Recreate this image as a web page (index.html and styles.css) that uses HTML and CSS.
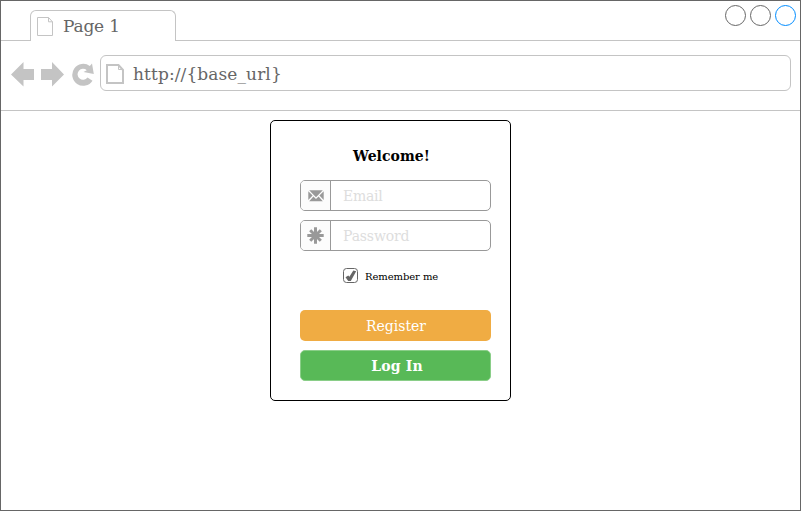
FILE: index.html
```html
<!DOCTYPE html>
<html lang="en">
<head>
<meta charset="utf-8">
<title>Page 1</title>
<link rel="stylesheet" href="styles.css">
</head>
<body>
<div class="window">
  <header class="tabstrip">
    <div class="tab">
      <svg class="tab-icon" width="17" height="20" viewBox="0 0 17 20"><path d="M.5.5H11.500L15.500 4.800V18.500H.5ZM11.500.5V4.800H15.500"/></svg>
      <span>Page 1</span>
    </div>
    <div class="controls">
      <svg width="71" height="22" viewBox="0 0 71 22"><circle cx="10.500" cy="10.500" r="10"/><circle cx="35.500" cy="10.500" r="10"/><circle class="active" cx="60.500" cy="10.500" r="10"/></svg>
    </div>
  </header>
  <nav class="toolbar">
    <svg class="nav-icons" width="84" height="26" viewBox="0 0 84 26">
      <path d="M0 13.500 12.500 1V8H23V19H12.500V25.500Z"/>
      <path d="M53 13.500 41 1V8H30V19H41V25.500Z"/>
      <path d="M81 2.500 82.800 13 72.500 11 75.800 9.200A5.500 5.500 0 1 0 76.500 16.500L81.500 19.800A11 11 0 1 1 78.800 5Z"/>
    </svg>
    <div class="address">
      <svg class="page-icon" width="18" height="20" viewBox="0 0 18 20"><path d="M1 1H12.500L17 6V19H1Z"/><path class="fold" d="M12.500 1V5.500H17"/></svg>
      <span>http://{base_url}</span>
    </div>
  </nav>
  <main class="content">
    <form class="card">
      <h1>Welcome!</h1>
      <div class="field">
        <div class="addon"><svg width="16" height="12" viewBox="0 0 16 12"><path d="M1.200.3H14.800L8 7.300ZM.3 1.200 4.600 5.600.3 10ZM15.700 1.200V10L11.400 5.600ZM5.400 6.500 8 9.100 10.600 6.500 14.800 11.300H1.200Z"/></svg></div>
        <span class="placeholder email">Email</span>
      </div>
      <div class="field">
        <div class="addon"><svg width="17" height="17" viewBox="0 0 17 17"><path class="spokes" d="M8.500.3V16.700M.3 8.500H16.700M3.200 3.200 13.800 13.800M13.800 3.200 3.200 13.800"/></svg></div>
        <span class="placeholder password">Password</span>
      </div>
      <div class="remember">
        <svg width="15" height="15" viewBox="0 0 15 15"><rect x=".5" y=".5" width="14" height="14" rx="3"/><path d="M2.500 9.300 5.300 7.600 6.400 8.800 10.300 2.500 13.200 3.200 7.800 13H5.200Z"/></svg>
        <span>Remember me</span>
      </div>
      <div class="button register">Register</div>
      <div class="button login">Log In</div>
    </form>
  </main>
</div>
</body>
</html>
```
FILE: styles.css
```css
* { box-sizing: border-box; }
body {
  margin: 0;
  background: #fff;
  font-family: "DejaVu Serif", serif;
}
svg { display: block; flex: none; }
.window {
  width: 801px;
  height: 511px;
  border: 1px solid #666;
  overflow: hidden;
}
.tabstrip {
  display: flex;
  justify-content: space-between;
  height: 40px;
  border-bottom: 1px solid #c4c4c4;
}
.tab {
  display: flex;
  align-items: center;
  width: 146px;
  height: 31px;
  margin: 9px 0 0 29px;
  padding-left: 6px;
  gap: 9px;
  border: 1px solid #c4c4c4;
  border-bottom: 0;
  border-radius: 6px 6px 0 0;
  background: #fff;
  color: #666;
  font-size: 17px;
  letter-spacing: -0.2px;
}
.tab-icon { fill: none; stroke: #c4c4c4; margin-top: 2px; }
.controls { margin: 4px 4px 0 0; fill: none; stroke: #666; }
.controls .active { stroke: #008cff; }
.toolbar {
  display: flex;
  height: 70px;
  padding: 14px 9px 0 10px;
  border-bottom: 1px solid #c4c4c4;
}
.nav-icons { margin: 6px 5px 0 0; fill: #c4c4c4; }
.address {
  display: flex;
  flex: 1;
  align-items: center;
  height: 36px;
  padding: 2px 0 0 5px;
  gap: 9px;
  border: 1px solid #c4c4c4;
  border-radius: 6px;
  color: #666;
  font-size: 17px;
  letter-spacing: 0.1px;
}
.page-icon { margin-top: -1px; fill: none; stroke: #c4c4c4; stroke-width: 2; }
.page-icon .fold { stroke-width: 1; }
.content { padding: 9px 0 0 269px; }
.card {
  width: 241px;
  height: 281px;
  padding: 0 19px 0 29px;
  border: 1px solid #000;
  border-radius: 5px;
  font-size: 14px;
}
h1 {
  margin: 25px 8px 14px 0;
  font-size: 14px;
  line-height: 20px;
  letter-spacing: 0.05px;
  text-align: center;
}
.field {
  display: flex;
  height: 31px;
  margin-bottom: 9px;
  border: 1px solid #999;
  border-radius: 5px;
  overflow: hidden;
}
.addon {
  display: flex;
  align-items: center;
  justify-content: center;
  width: 30px;
  border-right: 1px solid #999;
  background: #fcfcfc;
  fill: #999;
}
.spokes { stroke: #999; stroke-width: 3; }
.placeholder {
  padding-left: 12px;
  color: #ddd;
  line-height: 31px;
}
.email { letter-spacing: -0.25px; }
.password { letter-spacing: -0.15px; }
.remember {
  display: flex;
  align-items: center;
  height: 15px;
  margin: 17px 0 27px 43px;
  gap: 7px;
  font-size: 10px;
  letter-spacing: -0.08px;
}
.remember span { padding-top: 2px; }
.remember svg { fill: #666; }
.remember rect { fill: none; stroke: #666; }
.button {
  height: 31px;
  border-radius: 5px;
  color: #fff;
  line-height: 33px;
  text-align: center;
}
.register { margin-bottom: 9px; padding-left: 1px; background: #f0ac43; }
.login {
  padding-left: 3px;
  border: 1px solid #8ace88;
  background: #58b957;
  line-height: 31px;
  font-weight: bold;
  letter-spacing: 0.15px;
}
```
